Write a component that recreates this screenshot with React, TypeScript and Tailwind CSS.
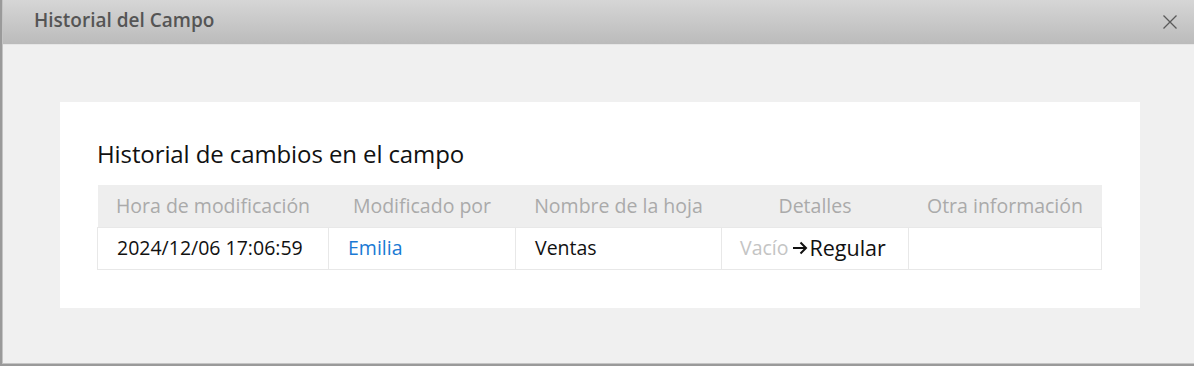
import React from "react";

export default function App() {
  const font = { fontFamily: '"Open Sans", "Noto Sans", sans-serif' };
  return (
    <div className="w-[1194px] h-[366px] bg-[#9a9a9a] overflow-hidden" style={font}>
      <div className="ml-[2px] w-[1192px] h-[364px] flex flex-col border-l border-b border-[#c4c4c4] bg-[#f0f0f0]">
        <div className="h-[45px] shrink-0 flex items-center justify-between pl-[31px] pr-[16px] bg-gradient-to-b from-[#d6d6d6] to-[#bbbbbb] border-b border-[#e6e6e6]">
          <span className="text-[19px] font-semibold text-[#555555] leading-none -mt-[3px]">Historial del Campo</span>
          <svg width="16" height="16" viewBox="0 0 16 16" className="-mt-[1px]">
            <path d="M1.5 1.5 L14.5 14.5 M14.5 1.5 L1.5 14.5" stroke="#5a5a5a" strokeWidth="1.3" fill="none" />
          </svg>
        </div>
        <div className="flex-1 pt-[57px] pl-[57px]">
          <div className="w-[1080px] h-[206px] bg-white pt-[36px] px-[37px]">
            <div className="text-[24px] text-[#111] leading-[32px] tracking-[-0.1px]">Historial de cambios en el campo</div>
            <table className="mt-[15px] w-[1004px] border-collapse text-[19.5px] table-fixed">
              <colgroup>
                <col className="w-[231px]" />
                <col className="w-[187px]" />
                <col className="w-[206px]" />
                <col className="w-[187px]" />
                <col className="w-[193px]" />
              </colgroup>
              <thead>
                <tr className="bg-[#eeeeee] h-[42px]">
                  {["Hora de modificación", "Modificado por", "Nombre de la hoja", "Detalles", "Otra información"].map((h) => (
                    <th key={h} className="font-normal text-[#aaaaaa] text-center whitespace-nowrap p-0">{h}</th>
                  ))}
                </tr>
              </thead>
              <tbody>
                <tr className="h-[42px]">
                  <td className="border border-[#e8e8e8] pl-[19px] text-[#111] whitespace-nowrap">2024/12/06 17:06:59</td>
                  <td className="border border-[#e8e8e8] pl-[19px] text-[#1a7ad4]">Emilia</td>
                  <td className="border border-[#e8e8e8] pl-[19px] text-[#111]">Ventas</td>
                  <td className="border border-[#e8e8e8] pl-[18px] text-[#111] whitespace-nowrap">
                    <span className="inline-flex items-center">
                      <span className="text-[#c4c4c4]">Vacío</span>
                      <svg width="16" height="16" viewBox="0 0 16 16" className="ml-[4px] mr-[1px]">
                        <path d="M1 8 H14 M8.5 2.5 L14 8 L8.5 13.5" stroke="#111" strokeWidth="2" fill="none" />
                      </svg>
                      <span className="text-[21.5px]">Regular</span>
                    </span>
                  </td>
                  <td className="border border-[#e8e8e8]"></td>
                </tr>
              </tbody>
            </table>
          </div>
        </div>
      </div>
    </div>
  );
}
